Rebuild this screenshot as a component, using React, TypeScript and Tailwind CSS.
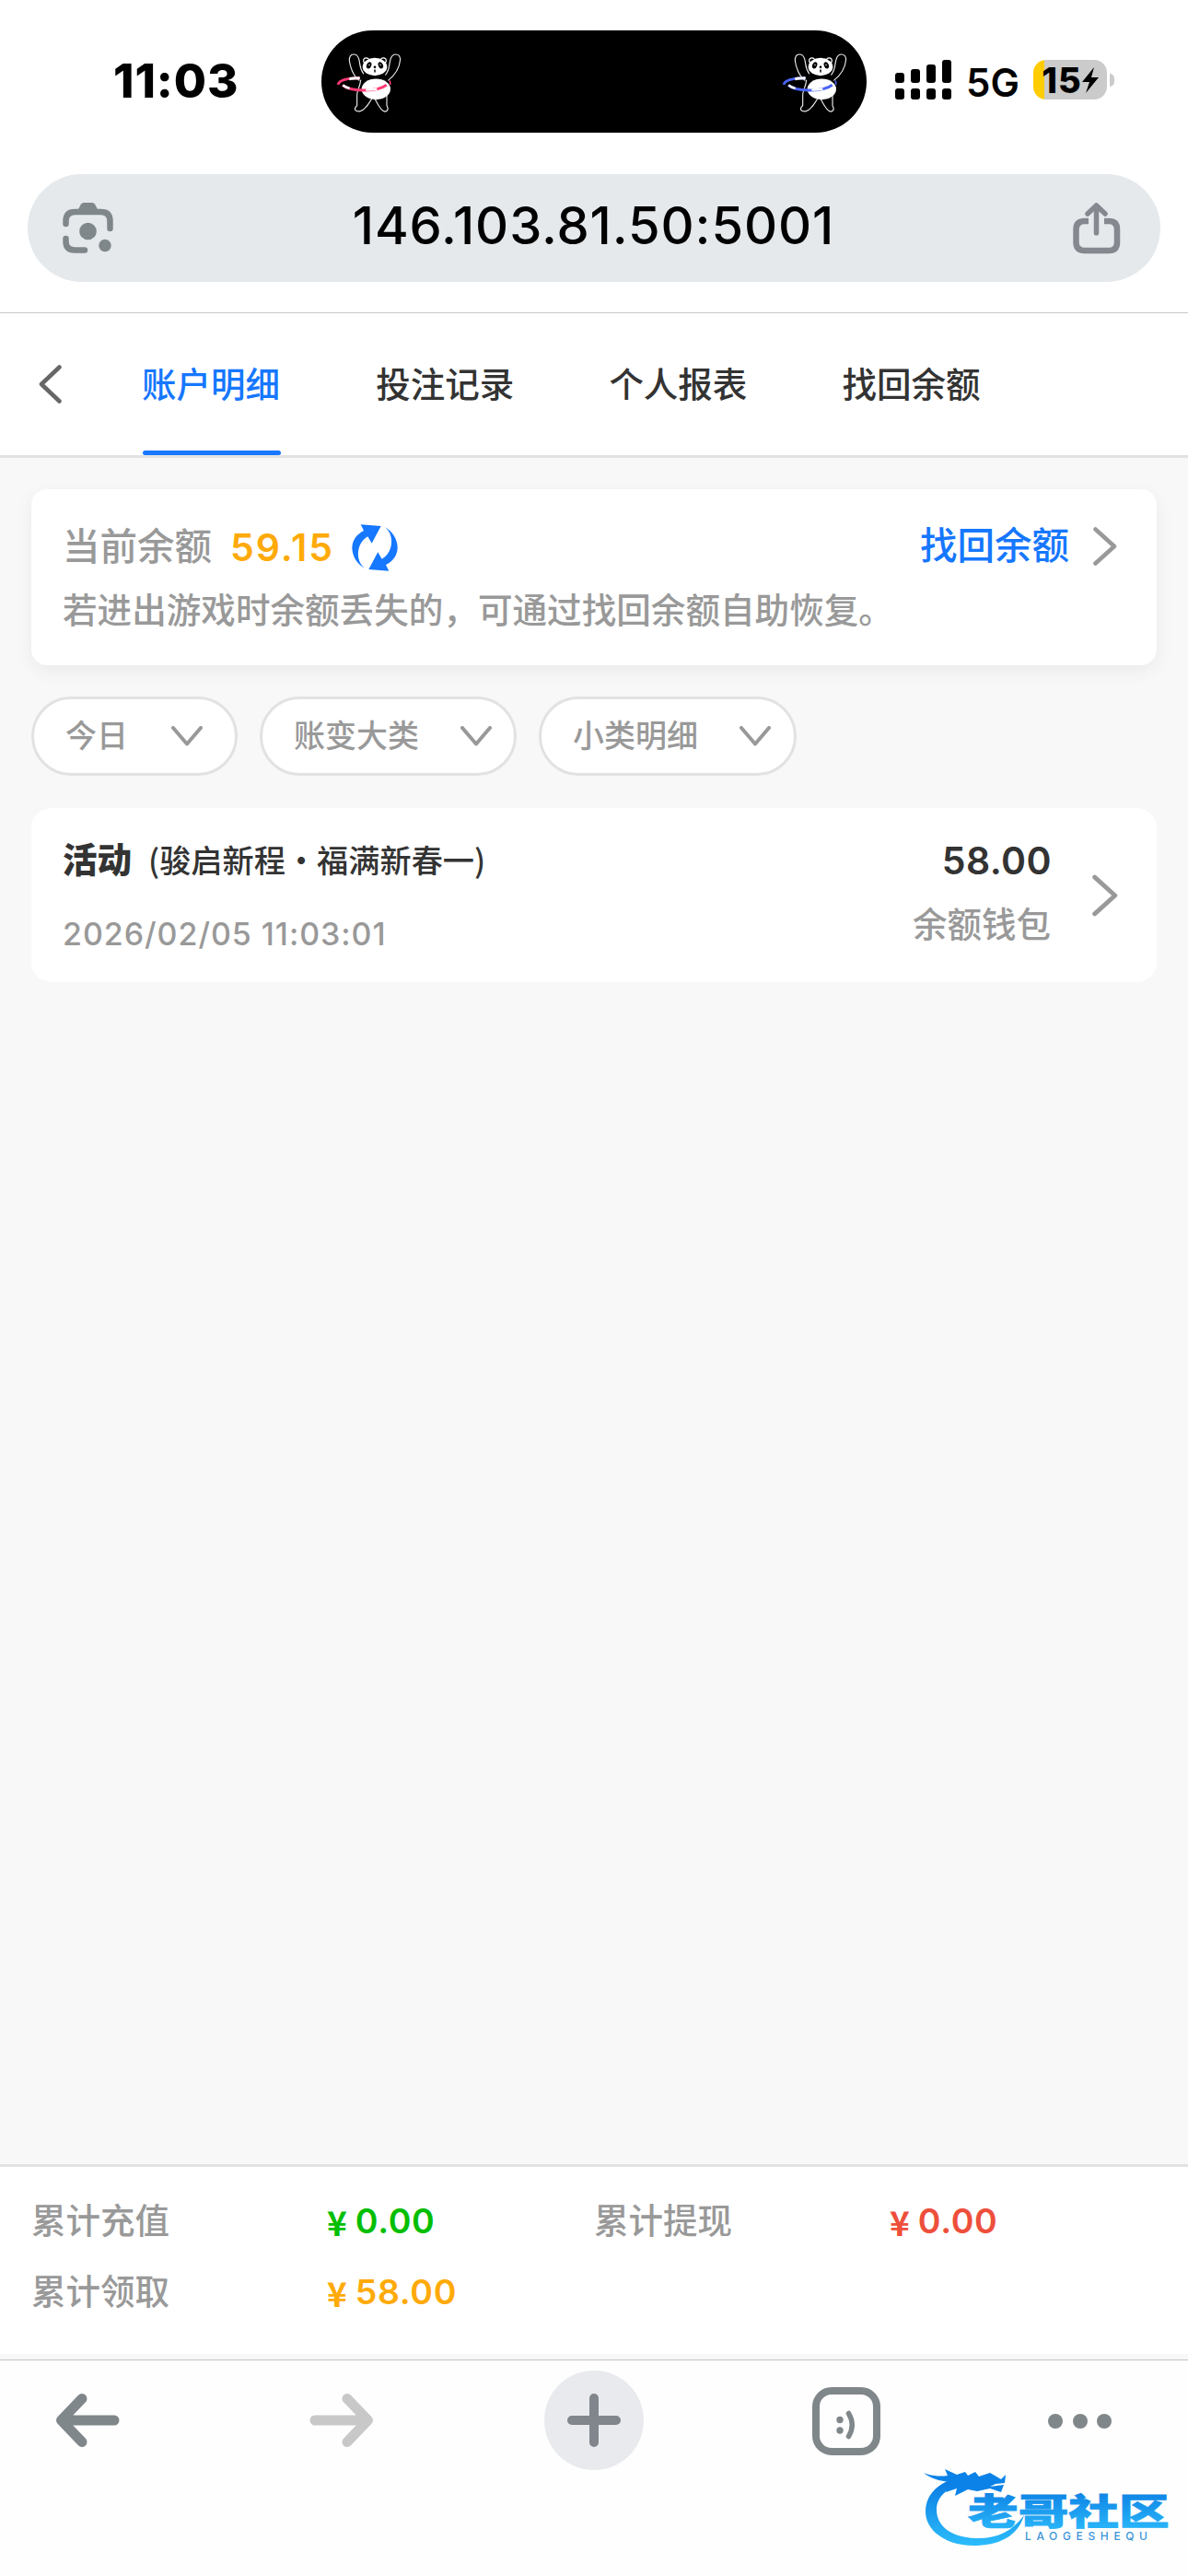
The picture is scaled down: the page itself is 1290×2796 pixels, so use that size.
const tabs = ['账户明细', '投注记录', '个人报表', '找回余额'];

const filters = [
  { label: '今日', gap: 'gap-[47px]', pad: 'pr-[35px]' },
  { label: '账变大类', gap: 'gap-[45px]', pad: 'pr-[24px]' },
  { label: '小类明细', gap: 'gap-[45px]', pad: 'pr-[25px]' },
];

const totals = [
  { label: '累计充值', value: '0.00', color: 'text-[#04be02]' },
  { label: '累计提现', value: '0.00', color: 'text-[#ee4f3b]' },
  { label: '累计领取', value: '58.00', color: 'text-[#ffaa09]' },
];

function Panda({ hoop }: { hoop: string }) {
  return (
    <svg width="84" height="84" viewBox="21 19.5 252 252" fill="none">
      {/* arms and legs */}
      <g stroke="#e8e8e8" strokeWidth="3.500" strokeLinecap="round" strokeLinejoin="round">
        <path d="M120 140C100 125 90 95 88 75C88 50 112 50 119 70C124 88 120 100 134 118" />
        <path d="M215 140C240 120 252 95 254 72C252 50 228 50 222 72C216 92 220 105 206 122" />
        <path d="M125 140C122 165 112 175 113 190V222C100 235 108 242 122 241C138 238 150 218 161 200" />
        <path d="M172 202C182 220 190 240 204 242C218 240 213 228 210 222V190" />
      </g>
      <circle cx="143" cy="76" r="9" stroke="#fff" strokeWidth="3.500" />
      <circle cx="199" cy="76" r="9" stroke="#fff" strokeWidth="3.500" />
      <ellipse cx="171" cy="96" rx="40" ry="29" fill="#fff" />
      <ellipse cx="152" cy="91" rx="7.500" ry="11" transform="rotate(25 152 91)" fill="#000" />
      <ellipse cx="190" cy="91" rx="7.500" ry="11" transform="rotate(-25 190 91)" fill="#000" />
      <circle cx="153" cy="90" r="2" fill="#fff" />
      <circle cx="189" cy="90" r="2" fill="#fff" />
      <circle cx="171" cy="97" r="4" fill="#000" />
      <path d="M171 105V114" stroke="#000" strokeWidth="4.500" />
      <ellipse cx="175" cy="169" rx="47" ry="34" fill="#fff" />
      {/* hoop */}
      <path d="M122 133C88 133 56 138 51 154" stroke={hoop} strokeWidth="9" />
      <path d="M122 133C110 133 100 133 88 136" stroke="#fff" strokeWidth="9" />
      <path d="M66 155C86 176 180 180 209 155" stroke={hoop} strokeWidth="9" />
      <path d="M67 156C73 161 80 164 89 166M142 171C155 171 168 170 178 168" stroke="#fff" strokeWidth="7" />
      <path d="M219 141C222 146 222 150 221 155" stroke={hoop} strokeWidth="5" />
    </svg>
  );
}

function StatusBar() {
  return (
    <header className="flex h-[189px] items-start pl-[123px] pt-[33px]">
      <div className="flex h-[111px] w-[226px] items-center pb-[2px] text-[51px] font-extrabold leading-none tracking-[0.900px]">
        11:03
      </div>
      <div className="flex h-[111px] w-[592px] items-center justify-between rounded-full bg-black pl-[8px] pr-[16px]">
        <Panda hoop="#ff3b74" />
        <Panda hoop="#4a63f5" />
      </div>
      <svg className="ml-[31px] mt-[32px]" width="62" height="44" viewBox="0 0 62 44">
        <rect x="0" y="14" width="10" height="11" rx="3" />
        <rect x="17" y="10" width="10" height="15" rx="3" />
        <rect x="34" y="5" width="10" height="20" rx="3" />
        <rect x="51" y="0" width="10" height="25" rx="3" />
        <rect x="0" y="31" width="10" height="12" rx="3" />
        <rect x="17" y="31" width="10" height="12" rx="3" />
        <rect x="34" y="31" width="10" height="12" rx="3" />
        <rect x="51" y="31" width="10" height="12" rx="3" />
      </svg>
      <div className="ml-[15px] mt-[36px] w-[73px] text-[42px] font-semibold leading-[41px]">5G</div>
      <div className="mt-[32px] flex items-center">
        <div className="flex h-[43px] w-[80px] items-center justify-center overflow-hidden rounded-[14px] bg-[linear-gradient(90deg,#fc0_12px,#cbcbcb_12px)]">
          <span className="text-[38px] font-extrabold leading-none tracking-[1px]">15</span>
          <svg width="18" height="28" viewBox="0 0 18 28">
            <path d="M13 0L0 16H8L4 28L18 11H10Z" />
          </svg>
        </div>
        <div className="ml-[3px] h-[14px] w-[5px] rounded-r-full bg-[#cbcbcb]" />
      </div>
    </header>
  );
}

function AddressBar() {
  return (
    <div className="mx-[30px] flex h-[117px] items-center justify-between rounded-full bg-[#e5e9ec] pl-[38px] pr-[43px]">
      <svg width="56" height="56" viewBox="0 0 56 56" fill="none">
        <g stroke="#80878a" strokeWidth="6.500" strokeLinecap="round">
          <path d="M3.500 23V20Q3.500 10 13.500 10H41.500Q51.500 10 51.500 20V28" />
          <path d="M3.500 39V42Q3.500 51.500 13.500 51.500H24" />
        </g>
        <path d="M16 9L20 1.500Q21 0 23 0H32Q34 0 35 1.500L39 9Z" fill="#80878a" />
        <circle cx="27.500" cy="31" r="9.300" fill="#80878a" />
        <circle cx="46" cy="46.500" r="6.700" fill="#80878a" />
      </svg>
      <div className="pb-[6px] text-[56px] font-medium leading-none tracking-[0.900px]">146.103.81.50:5001</div>
      <svg width="52" height="56" viewBox="0 0 52 56" fill="none" stroke="#85888f" strokeWidth="6.500">
        <path d="M17 20H13Q3.500 20 3.500 29V43Q3.500 52 13 52H39Q48 52 48 43V29Q48 20 39 20H34" />
        <path d="M25.500 33V4M16 12L25.500 3L35 12" strokeWidth="5.500" strokeLinecap="round" strokeLinejoin="round" />
      </svg>
    </div>
  );
}

function ChevronRight({ className }: { className: string }) {
  return (
    <svg className={className} viewBox="0 0 26 42" fill="none" stroke="#999" strokeWidth="4.500" strokeLinecap="round" strokeLinejoin="round">
      <path d="M2.500 2.500L23 21L2.500 39.500" />
    </svg>
  );
}

function TabBar() {
  return (
    <nav className="flex h-[157px] items-center border-b-[3px] border-[#e2e2e2] pl-[42px]">
      <svg className="mr-[88px]" width="25" height="42" viewBox="0 0 25 42" fill="none" stroke="#666" strokeWidth="4.500" strokeLinecap="round" strokeLinejoin="round">
        <path d="M22.500 2.500L3 21L22.500 39.500" />
      </svg>
      <div className="flex h-full gap-[104.200px]">
        {tabs.map((tab, i) => (
          <div
            key={tab}
            className={
              i === 0
                ? 'flex flex-col justify-between text-[#1677ff]'
                : 'flex flex-col justify-between text-[#333]'
            }
          >
            <span className="-ml-px pt-[53px] text-[37.500px] font-medium leading-[50px]">{tab}</span>
            {i === 0 && <span className="h-[5px] w-[150px] rounded-full bg-[#1677ff]" />}
          </div>
        ))}
      </div>
    </nav>
  );
}

function BalanceCard() {
  return (
    <section className="h-[191px] rounded-[17px] bg-white pl-[34px] pr-[43px] pt-[33px] shadow-[0_6px_20px_rgba(0,0,0,0.06)]">
      <div className="flex h-[60px] items-center">
        <span className="text-[40.500px] font-medium leading-[60px] text-[#999]">当前余额</span>
        <span className="ml-[20px] text-[41px] font-semibold leading-[60px] tracking-[1.900px] text-[#ffaa09]">59.15</span>
        <svg className="ml-[19px]" width="50" height="51" viewBox="36 39 150 153" fill="#1677ff">
          <path d="M65 40L131 45L101 101L88 79C60 95 50 130 61 160C66 172 74 180 80 184C50 168 37 140 37 115C38 90 52 72 75 60Z" />
          <path
            transform="rotate(180 111 115.5)"
            d="M65 40L131 45L101 101L88 79C60 95 50 130 61 160C66 172 74 180 80 184C50 168 37 140 37 115C38 90 52 72 75 60Z"
          />
        </svg>
        <div className="ml-auto flex items-center pb-[3px]">
          <span className="text-[40.500px] font-medium leading-[57px] text-[#1677ff]">找回余额</span>
          <ChevronRight className="ml-[26px] h-[42px] w-[26px]" />
        </div>
      </div>
      <p className="mt-[13px] text-[37.600px] font-medium leading-[52px] text-[#999]">
        若进出游戏时余额丢失的，可通过找回余额自助恢复。
      </p>
    </section>
  );
}

function Filters() {
  return (
    <div className="mt-[34px] flex gap-[24px]">
      {filters.map((f) => (
        <button
          key={f.label}
          className={`flex h-[86px] items-center rounded-full border-[3px] border-[#e2e2e2] bg-white pl-[34px] text-[34px] font-medium text-[#999] ${f.gap} ${f.pad}`}
        >
          <span className="leading-none">{f.label}</span>
          <svg width="34" height="22" viewBox="0 0 34 22" fill="none" stroke="#999" strokeWidth="4" strokeLinecap="round" strokeLinejoin="round">
            <path d="M2 2L17 19.500L32 2" />
          </svg>
        </button>
      ))}
    </div>
  );
}

function RecordCard() {
  return (
    <section className="mt-[35px] flex h-[189px] items-center rounded-[22px] bg-white pl-[34px] pr-[42px]">
      <div className="flex flex-col self-stretch pt-[32px]">
        <div className="flex h-[50px] items-start text-[#333]">
          <span className="text-[37.500px] font-black leading-[50px]">活动</span>
          <span className="ml-[18px] font-[Noto_Sans_CJK_SC] text-[34.200px] font-medium leading-[46px]">(骏启新程·福满新春一)</span>
        </div>
        <div className="mt-[30px] text-[34px] font-medium leading-[50px] tracking-[0.950px] text-[#999]">2026/02/05 11:03:01</div>
      </div>
      <div className="ml-auto flex flex-col items-end self-stretch pt-[30px]">
        <span className="text-[41px] font-semibold leading-[54px] tracking-[0.400px] text-[#333]">58.00</span>
        <span className="mr-px mt-[18px] text-[37.500px] font-medium leading-[50px] text-[#999]">余额钱包</span>
      </div>
      <ChevronRight className="ml-[44px] h-[46px] w-[28px]" />
    </section>
  );
}

function Totals() {
  return (
    <section className="mb-[6px] grid h-[206px] grid-cols-2 content-start border-t-[3px] border-[#e2e2e2] bg-white px-[34px] pt-[21px]">
      {totals.map((t) => (
        <div key={t.label} className="flex h-[77px] items-center font-medium">
          <span className="w-[321px] text-[37.500px] text-[#999]">{t.label}</span>
          <span className={`flex items-center gap-[9px] pb-[2px] ${t.color}`}>
            <span className="font-[Noto_Sans_CJK_SC] text-[37px] font-bold leading-[48px]">¥</span>
            <span className="text-[37.500px] font-semibold leading-[50px] tracking-[0.600px]">{t.value}</span>
          </span>
        </div>
      ))}
    </section>
  );
}

function Logo() {
  return (
    <svg className="absolute bottom-[26px] right-[14px] overflow-visible" width="276" height="100" viewBox="0 0 276 100">
      <defs>
        <linearGradient id="sky" x1="0" y1="0" x2="0" y2="1">
          <stop offset="0" stopColor="#0877e0" />
          <stop offset="1" stopColor="#2cbcfb" />
        </linearGradient>
      </defs>
      {/* dragon: curled body, then head, horns and whiskers */}
      <g transform="translate(-5 -2)">
        <path
          d="M52 20C24 24 10 40 10 58C10 80 34 95 62 95C88 95 110 86 117 62C104 80 86 88 64 87C38 86 22 74 22 56C22 42 34 32 50 28Z"
          fill="url(#sky)"
        />
        <path
          d="M8 16C18 20 26 20 34 19L31 12L44 18L53 15L56 19L64 15L68 20L80 16L92 23L97 18L96 27L86 28L80 31L95 29L92 37L80 33L66 36L56 34L42 41L44 33L32 37L38 26C28 25 16 23 8 16Z"
          fill="#0b82e8"
        />
      </g>
      <text
        x="0"
        y="0"
        transform="translate(51 69.5) scale(1.420 1)"
        fontFamily="Noto Sans CJK SC"
        fontWeight="900"
        fontSize="38.500"
        stroke="url(#sky)"
        strokeWidth="0.800"
        fill="url(#sky)"
      >
        老哥社区
      </text>
      <text x="113" y="86.500" fontFamily="Inter" fontWeight="500" fontSize="12" fill="#3a94d8" textLength="133">
        LAOGESHEQU
      </text>
    </svg>
  );
}

function Toolbar() {
  return (
    <footer className="relative flex h-[235px] items-start border-t border-[#c4c4c4] bg-[#fefefe] pl-[60px] pt-[11px]">
      <div className="flex h-[108px] w-[70px] items-center">
        <svg width="70" height="58" viewBox="0 0 70 58" fill="none" stroke="#80878a" strokeWidth="11" strokeLinecap="round" strokeLinejoin="round">
          <path d="M64 29H8M29 5.500L6.500 29L29 52.500" />
        </svg>
      </div>
      <div className="ml-[206px] flex h-[108px] w-[70px] items-center">
        <svg width="70" height="58" viewBox="0 0 70 58" fill="none" stroke="#c8c8c8" strokeWidth="11" strokeLinecap="round" strokeLinejoin="round">
          <path d="M6 29H62M41 5.500L63.500 29L41 52.500" />
        </svg>
      </div>
      <div className="ml-[185px] flex size-[108px] items-center justify-center rounded-full bg-[#e8eaed]">
        <svg width="58" height="58" viewBox="0 0 58 58" stroke="#80868b" strokeWidth="10" strokeLinecap="round">
          <path d="M5 29H53M29 5V53" />
        </svg>
      </div>
      <div className="ml-[183px] flex h-[108px] items-center pt-[2px]">
        <svg width="74" height="74" viewBox="0 0 74 74" fill="none" stroke="#80878a">
          <rect x="4" y="4" width="66" height="66" rx="17" strokeWidth="8" />
          <circle cx="30" cy="35.500" r="3.700" fill="#80878a" stroke="none" />
          <circle cx="30" cy="47" r="3.700" fill="#80878a" stroke="none" />
          <path d="M39.500 28.500Q47 41 39.500 53.500" strokeWidth="5.500" strokeLinecap="round" />
        </svg>
      </div>
      <div className="ml-[182px] flex h-[108px] items-center gap-[10.500px] pt-[2px]">
        <span className="size-[16px] rounded-full bg-[#80878a]" />
        <span className="size-[16px] rounded-full bg-[#80878a]" />
        <span className="size-[16px] rounded-full bg-[#80878a]" />
      </div>
      <Logo />
    </footer>
  );
}

export default function App() {
  return (
    <div className="flex h-[2796px] w-[1290px] flex-col bg-[#f8f8f8] font-[Inter,Noto_Sans_CJK_SC,sans-serif] text-black">
      <div className="h-[340px] border-b border-[#c8c8c8] bg-white">
        <StatusBar />
        <AddressBar />
      </div>
      <div className="bg-white">
        <TabBar />
      </div>
      <main className="flex-1 px-[34px] pt-[34px]">
        <BalanceCard />
        <Filters />
        <RecordCard />
      </main>
      <Totals />
      <Toolbar />
    </div>
  );
}
